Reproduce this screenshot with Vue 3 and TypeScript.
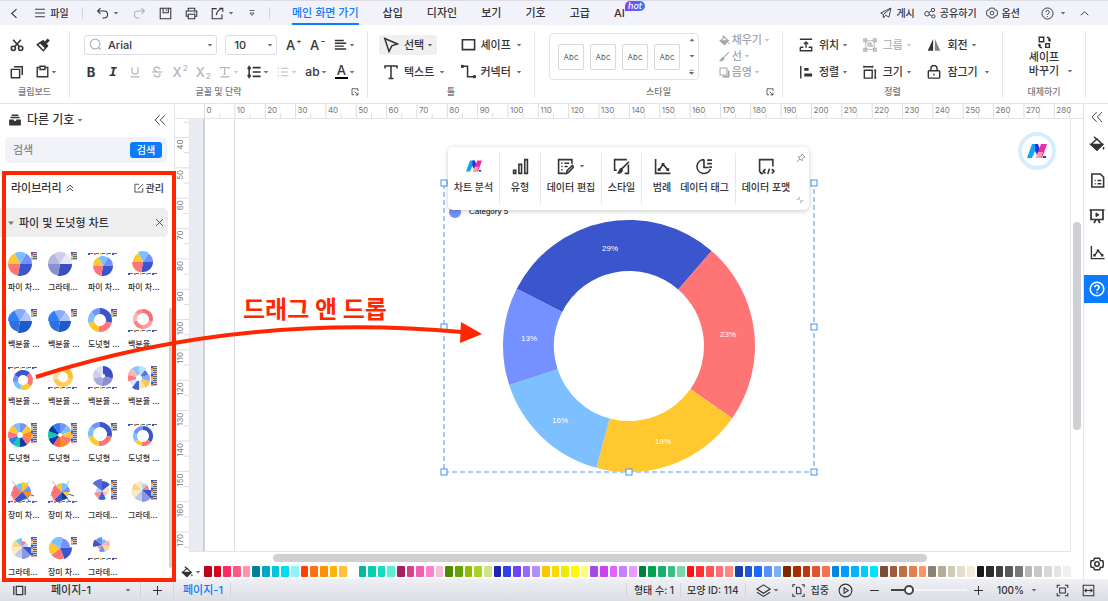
<script setup lang="ts">
import { h, ref } from 'vue'

const glyphs: Record<string, string> = {
  back: '<path d="M10.5 2.500 4.500 8l6 5.500"/>',
  up: '<path d="M2.500 10.500 8 5.500l5.500 5"/>',
  menu: '<path d="M1.500 3h13M1.500 8h13M1.500 13h13"/>',
  undo: '<path d="M5.500 1.500 2 5l3.500 3.500M2.400 5H10a4 4 0 0 1 0 8.500H8"/>',
  redo: '<path d="M10.500 1.500 14 5l-3.500 3.500M13.600 5H6a4 4 0 0 0 0 8.500H8"/>',
  save: '<path d="M1.500 1.500h13v13h-13zM5 1.500v5.500h6.500V1.500M9 3v2"/>',
  print: '<path d="M4 5V1.500h8V5M4 11.500H1.500V5h13v6.500H12M4 9h8v5.500H4zM11.500 7h1"/>',
  share: '<path d="M7 2H1.500v12.500h12V9M10 1.500h4.500V6M14.500 1.500C9.500 3 7 6 6.500 10"/>',
  more: '<path d="M3 3h10M4 8l4 5 4-5z"/>',
  plane: '<path d="M14.500 1.500 1 8l3.500 2 10-8.500L12 13.500 7.500 11M4.500 10v4.500l3-3.500"/>',
  nodes: '<circle cx="4" cy="9" r="3"/><circle cx="12" cy="4" r="2.200"/><circle cx="12.500" cy="12.500" r="2.200"/><path d="M6.500 7.500 10 5M6.800 10l3.500 1.600"/>',
  gear: '<path d="M5.200 1.500h5.600l1 2.400 2.700.4 1 3.700-1 3.700-2.700.4-1 2.400H5.200l-1-2.400-2.700-.4-1-3.700 1-3.700 2.700-.4z"/><circle cx="8" cy="8" r="2.500"/>',
  help: '<circle cx="8" cy="8" r="6.800"/><path d="M5.900 6.300a2.100 2.100 0 1 1 3.200 1.800c-.8.500-1.100.8-1.100 1.700M8 11.200v1"/>',
  cut: '<circle cx="3.800" cy="11.800" r="2.400"/><circle cx="12.200" cy="11.800" r="2.400"/><path d="M5.200 10 12.500 2M10.800 10 3.500 2"/>',
  brush: '<path d="M1.500 7.500 8 3.500l5 5.500-4.500 5.500z"/><path d="M5 5.500 8 3.500l5 5.500-2 2.300z" fill="currentColor"/><path d="m11 5.500 3.500-3.800" stroke-width="3.400"/>',
  copy: '<path d="M1.500 5h9.500v9.500H1.500zM4.500 2h9.500v9.500"/>',
  paste: '<path d="M4.500 3h-3v11.500h13V3h-3"/><path d="M5 1.500h6v4H5z"/>',
  search: '<circle cx="7.500" cy="7.500" r="6"/><path d="m12 12 2.500 2.500"/>',
  alignL: '<path d="M1 3h11M1 6.500h14M1 10h11M1 13.500h14"/>',
  under: '<path d="M4 1.500V7a4 4 0 0 0 8 0V1.500M2 14.500h12"/>',
  strike: '<path d="M12 4.500C11.500 2.500 10 1.500 8 1.500c-2.500 0-4 1.200-4 3s1.500 2.500 4 3M1 8h14M4 11c.3 2.200 1.800 3.500 4 3.500 2.500 0 4-1.200 4-3 0-.8-.2-1.500-.8-2"/>',
  charT: '<path d="M2 4V2h11v2M7.500 2v9M5.500 11h4M2 14.500h12"/>',
  spacing: '<path d="M6.500 3h9M6.500 8h9M6.500 13h9"/><path d="M2.500 2v12M.8 4.500 2.500 2l1.700 2.500M.8 11.500 2.500 14l1.700-2.500"/>',
  list: '<path d="M5.500 3H15M5.500 8H15M5.500 13H15M1 3h1.800M1 8h1.800M1 13h1.800"/>',
  launch: '<path d="M6 13.500H2v-12h12V6M7 7l7 7M14 9v5H9"/>',
  cursor: '<path d="M1.800 1.500 14.500 7 8.800 8.800 6 14.500z"/>',
  rect: '<path d="M1.500 3h13v10.500h-13z"/>',
  text: '<path d="M2 4.500V2h12v2.500M8 2v12.500M5.500 14.500h5"/>',
  connector: '<path d="M1 2.500h6v11h7"/><circle cx="1.500" cy="2.500" r="1" fill="currentColor"/><circle cx="14.300" cy="13.500" r="1" fill="currentColor"/>',
  fill: '<path d="m8 3 5.500 5.500L8 14 2 8.500z"/><path d="M2 8.500h11.500L8 14z" fill="currentColor"/><path d="M5 .8 8.500 4M14.500 11v2.500"/>',
  line: '<path d="M14.500 1.500 6.500 9.500"/><path d="M6 9.500c-2 0-2 2-4.500 4.500 3 .5 5.500-1 5.500-3.500z" fill="currentColor"/>',
  shadow: '<path d="M1.500 1.500h10v10h-10z"/><path d="M14 5v9H5" stroke-width="2.500"/>',
  position: '<path d="M1 1.500h14M1.500 10.500v4h13v-4H11M5 10.500H1.500M8 11V5M5.500 7 8 4.500 10.500 7"/>',
  alignB: '<path d="M2 1v14.500"/><path d="M6 5h5M6 11.500h9" stroke-width="3.400"/>',
  group: '<path d="M3 3h10v10H3z" opacity=".7"/><path d="M1 1h3v3H1zM12 1h3v3h-3zM1 12h3v3H1zM12 12h3v3h-3zM6 6h3v3H6zM8 8.500h2.500V10"/>',
  size: '<path d="M1.500 6h9v9h-9zM1 2h10M1 .8v2.400M11 .8v2.400M14 6v9M12.800 6h2.400M12.800 15h2.400"/>',
  rotate: '<path d="M7 1v13.500H.8z" fill="currentColor" stroke="none"/><path d="M9 1v13.500h6.200z" fill="currentColor" stroke="none" opacity=".6"/>',
  lock: '<rect x="1.500" y="6.500" width="13" height="8.500" rx="1"/><path d="M4.500 6V4a3.500 3.500 0 0 1 7 0v2M8 10v2"/>',
  swap: '<path d="M1.500 1.500H7V7H1.500zM9.500 9.500H14V14H9.500zM11 1.500c2.500 0 3.500 1.200 3.500 4M12.500 4.500l2 1.500 1-2M5 14.500c-2.500 0-3.500-1-3.500-3.800M.5 12l1-1.500 2 1.200"/>',
  tray: '<path d="M3.500 1.500h9M2 4.500h12" stroke-width="2"/><path d="M1 8h4.500c0 1.300 1 2.200 2.500 2.200s2.500-.9 2.500-2.200H15v6.500H1z" fill="currentColor"/>',
  collapseL: '<path d="M7.500 1.500 1.500 8l6 6.500M14.500 1.500 8.500 8l6 6.500"/>',
  collapseU: '<path d="m3 8 5-4.500L13 8M3 13l5-4.500 5 4.500"/>',
  edit: '<path d="M8 2H1.500v12.500H14V8M6.500 10l8-8.500"/>',
  close: '<path d="m2 2 12 12M14 2 2 14"/>',
  bars: '<path d="M1.500 11.500h2v3h-2zM6.500 6h2.500v8.500H6.500zM12 1.500h2.500v13H12z"/>',
  dataEdit: '<path d="M14 5.500v-4H1.500v13H8M4 5h1.200M7 5h4.500M4 8h1.200M7 8h3M4 11h1.200M9 14.500l.5-2.500 5-5 1.200 1.500-4.800 5z"/>',
  styler: '<path d="M3.500 11.500h-2v-10h11.500M14.500 6v8.500h-3.500M15 3.500 8.500 10"/><path d="M8 10c-1.500 0-1.500 2-3 4 2 .4 3.600-1 3.600-3z" fill="currentColor"/>',
  scatter: '<path d="M1.500 1v13.500H15.500M5 11 8.500 6l4.500 5"/><path d="M8.500 4.700v2.600M4.800 9.700v2.600M13 9.700v2.600" stroke-width="2.600"/>',
  tag: '<path d="M7.500 1.500a6.500 6.500 0 1 0 6 9M7.500 1.500V9H12M10.500 2H15M10.500 5.300H15M12.500 8.600H15"/>',
  format: '<path d="M5 14.500H3l-1.500-2v-11h12.500V8M7 10.500 5 12.500l2 2M13 10.500l2 2-2 2M10.800 10l-1.600 5"/>',
  pin: '<path d="m9.500 1.500 5 5-2 .5-2.500 2.500-.5 3L3.500 6.500l3-.5L9 3.500zM6.500 9.500l-5 5"/>',
  shrink: '<path d="M6.500 1.500v5h-5M9.500 14.500v-5h5"/>',
  doc: '<path d="M2 1h9l3.500 3.500V15H2zM5 8h1M8 8h4M5 11.500h1M8 11.500h4"/>',
  present: '<path d="M.5 2h15M2 2v9.500h12V2M5 15l2-3.500M11 15l-2-3.500"/><path d="m7 5 3 1.800-3 1.800z" fill="currentColor" stroke-width="1"/>',
  pages: '<path d="M4 3h8v10H4zM1 2.500v11M15 2.500v11"/>',
  plus: '<path d="M8 1.500v13M1.500 8h13"/>',
  minus: '<path d="M1.500 8h13"/>',
  layers: '<path d="M8 2 15 6.500 8 11 1 6.500zM1 9.800l7 4.500 7-4.500"/>',
  docFrame: '<path d="M4 1H1v3M12 1h3v3M4 15H1v-3M12 15h3v-3M5.500 4h3l2.500 2.500V12H5.500z"/>',
  play: '<circle cx="8" cy="8" r="6.800"/><path d="m6.500 5 4.500 3-4.500 3z"/>',
  fit: '<path d="M1.500 5V1.500H5M11 1.500h3.500V5M14.500 11v3.500H11M5 14.500H1.500V11M4.500 5h7v6h-7z"/>',
  fitWidth: '<path d="M1.500 1.500h13v13h-13zM3.500 8h9M5.500 6l-2 2 2 2M10.500 6l2 2-2 2"/>',
  caret: '<path d="M2 5h12l-6 7z" fill="currentColor" stroke="none"/>',
  caretUp: '<path d="M2 11h12L8 4z" fill="currentColor" stroke="none"/>',
  caretMore: '<path d="M3 3h10"/><path d="M2 7h12l-6 6z" fill="currentColor" stroke="none"/>',
}

const Icon = (props: { n: string; s?: number; w?: number }) =>
  h('svg', {
    viewBox: '0 0 16 16',
    width: props.s ?? 13,
    height: props.s ?? 13,
    fill: 'none',
    stroke: 'currentColor',
    'stroke-width': props.w ?? 1.5,
    'aria-hidden': 'true',
    innerHTML: glyphs[props.n],
  })
Icon.props = ['n', 's', 'w']

const Caret = () => h(Icon, { n: 'caret', s: 6, opacity: 0.7 })

const tabs = ['메인 화면 가기', '삽입', '디자인', '보기', '기호', '고급']
const fontName = ref('Arial')
const fontSize = ref('10')
const query = ref('')
const zoom = ref(20)

const arrange = [
  { icon: 'position', label: '위치' },
  { icon: 'group', label: '그룹', off: true },
  { icon: 'rotate', label: '회전' },
  { icon: 'alignB', label: '정렬' },
  { icon: 'size', label: '크기' },
  { icon: 'lock', label: '잠그기', wide: true },
]

const chartTools = [
  { icon: 'logo', label: '차트 분석', sep: true },
  { icon: 'bars', label: '유형', sep: true },
  { icon: 'dataEdit', label: '데이터 편집', sep: true, drop: true },
  { icon: 'styler', label: '스타일', sep: true },
  { icon: 'scatter', label: '범례' },
  { icon: 'tag', label: '데이터 태그', sep: true },
  { icon: 'format', label: '데이터 포맷' },
]

function point(cx: number, cy: number, r: number, deg: number) {
  const a = ((deg - 90) * Math.PI) / 180
  return `${(cx + r * Math.cos(a)).toFixed(2)} ${(cy + r * Math.sin(a)).toFixed(2)}`
}

function wedge(cx: number, cy: number, r: number, inner: number, from: number, to: number) {
  const big = to - from > 180 ? 1 : 0
  return `M${point(cx, cy, r, from)}A${r} ${r} 0 ${big} 1 ${point(cx, cy, r, to)}L${point(cx, cy, inner, to)}A${inner} ${inner} 0 ${big} 0 ${point(cx, cy, inner, from)}Z`
}

const donut = [
  { from: -63, to: 41, color: '#3b55cc', label: '29%', x: 166, y: 68 },
  { from: 41, to: 125, color: '#ff7575', label: '23%', x: 284, y: 154 },
  { from: 125, to: 195, color: '#ffc82e', label: '19%', x: 219, y: 261 },
  { from: 195, to: 252, color: '#7cc0ff', label: '16%', x: 116, y: 240 },
  { from: 252, to: 297, color: '#7590ff', label: '13%', x: 85, y: 158 },
]
const handles = [[0, 0], [370, 0], [0, 144], [370, 144], [0, 289], [185, 289], [370, 289]]

const main5 = ['#7cc0ff', '#7590ff', '#3b55cc', '#ff7575', '#ffc82e']
const donut5 = ['#3b55cc', '#ff7575', '#ffc82e', '#7cc0ff', '#7590ff']
const lilac = ['#cdcfea', '#e6e8f8', '#3b4fc0', '#8a90d4', '#b4b8e0']
const blues = ['#86a8ff', '#b0c4ff', '#1f5bc8', '#2f6fe0', '#2f80f5']
const reds = ['#ff6a70', '#ff9a9e', '#ff8085', '#ffb4b6', '#ff8a8e']
const golds = ['#ffc02e', '#ffd067', '#ffca50', '#ffdc90', '#ffd67c']
const rainbow = ['#7590ff', '#ffc82e', '#ff8a1e', '#ff7575', '#0a3ba8', '#12c8b0', '#2f80f5', '#ff7575', '#ffc82e', '#7cc0ff']
const vivid = ['#7590ff', '#7cc0ff', '#ffc82e', '#ff7575', '#ff8a1e', '#ff5a5a', '#0a3ba8', '#12c8b0', '#0a3ba8', '#2f80f5']
const soft = ['#b8e0ff', '#4d7be8', '#8ca8f8', '#fbc55a', '#ffe0a0', '#3b62d8', '#d5e6ff', '#ff7c80', '#ffb4b4', '#8cc4ff']

const pieCuts = [-28, 32, 90, 190, 270, 332]
const ringCuts = [0, 104, 187, 255, 313, 360]

interface Thumb {
  label: string
  cx: number
  cy: number
  r: number
  inner: number
  colors: string[]
  cuts: number[]
  radii?: number[]
  legend: 'right' | 'top' | 'bottom' | 'tall'
  rays?: boolean
}

function even(n: number) {
  return Array.from({ length: n + 1 }, (_, i) => (i * 360) / n)
}

const thumbs: Thumb[] = [
  { label: '파이 차...', cx: 12, cy: 16, r: 12, inner: 0, colors: main5, cuts: pieCuts, legend: 'right' },
  { label: '그라데...', cx: 12, cy: 16, r: 12, inner: 0, colors: lilac, cuts: pieCuts, legend: 'right' },
  { label: '파이 차...', cx: 15, cy: 18, r: 10, inner: 0, colors: main5, cuts: pieCuts, legend: 'top' },
  { label: '파이 차...', cx: 15, cy: 14, r: 10, inner: 0, colors: main5, cuts: pieCuts, radii: [11, 10, 10, 11, 10], legend: 'bottom' },
  { label: '백분율 ...', cx: 12, cy: 16, r: 12, inner: 0, colors: blues, cuts: pieCuts, radii: [12, 11, 12, 11, 12], legend: 'right' },
  { label: '백분율 ...', cx: 12, cy: 16, r: 11, inner: 0, colors: blues, cuts: pieCuts, radii: [11, 10, 11, 11, 12], legend: 'right' },
  { label: '도넛형 ...', cx: 12, cy: 15, r: 12, inner: 6, colors: donut5, cuts: ringCuts, legend: 'right' },
  { label: '백분율 ...', cx: 15, cy: 14, r: 10, inner: 6, colors: reds, cuts: ringCuts, legend: 'bottom' },
  { label: '백분율 ...', cx: 15, cy: 18, r: 10, inner: 5, colors: donut5, cuts: [-60, 45, 128, 196, 254, 300], legend: 'top' },
  { label: '백분율 ...', cx: 15, cy: 15, r: 10, inner: 5, colors: golds, cuts: ringCuts, legend: 'bottom' },
  { label: '백분율 ...', cx: 15, cy: 14, r: 10, inner: 2, colors: ['#3b4fc0', '#8a90d4', '#a8acde', '#cdcfea', '#dcdef4'], cuts: ringCuts, legend: 'bottom' },
  { label: '백분율 ...', cx: 11, cy: 16, r: 12, inner: 3, colors: soft, cuts: even(10), radii: [12, 10, 11, 12, 11, 12, 10, 11, 12, 12], legend: 'tall' },
  { label: '도넛형 ...', cx: 12, cy: 16, r: 12, inner: 3, colors: rainbow, cuts: even(10), legend: 'tall' },
  { label: '도넛형 ...', cx: 12, cy: 16, r: 12, inner: 2, colors: vivid, cuts: even(10), legend: 'tall' },
  { label: '도넛형 ...', cx: 12, cy: 15, r: 12, inner: 7, colors: donut5, cuts: ringCuts, legend: 'right' },
  { label: '도넛형 ...', cx: 15, cy: 17, r: 10, inner: 6, colors: donut5, cuts: [0, 128, 190, 235, 290, 360], legend: 'top' },
  { label: '장미 차...', cx: 14, cy: 16, r: 10, inner: 0, colors: ['#ffc82e', '#7590ff', '#ff8a1e', '#3b55cc', '#3b55cc', '#ff7575', '#ff7575', '#7cc0ff'], cuts: even(8), radii: [10, 9, 9, 8, 11, 11, 10, 9], legend: 'bottom', rays: true },
  { label: '장미 차...', cx: 14, cy: 16, r: 10, inner: 0, colors: ['#7cc0ff', '#7590ff', '#ffc82e', '#0a3ba8', '#3b55cc', '#ff7575', '#ff7575', '#ffc82e'], cuts: even(8), radii: [9, 8, 7, 8, 11, 11, 10, 9], legend: 'bottom', rays: true },
  { label: '그라데...', cx: 14, cy: 15, r: 10, inner: 0, colors: ['#3b55cc', '#ffe0a8', '#ffc4c4', '#3b62d8', '#ff8a90', '#a8dcff', '#5a70e0'], cuts: even(7), radii: [10, 7, 6, 9, 8, 6, 12], legend: 'tall' },
  { label: '그라데...', cx: 14, cy: 14, r: 12, inner: 0, colors: ['#a8dcff', '#ff7c80', '#3b55cc', '#8a98e4', '#c0c8f0', '#ffe9c0', '#fbd58a', '#ffe6b8'], cuts: even(8), radii: [7, 7, 12, 12, 11, 11, 10, 9], legend: 'tall' },
  { label: '그라데...', cx: 14, cy: 14, r: 12, inner: 0, colors: ['#ff7c80', '#a8dcff', '#3b55cc', '#8a98e4', '#c0c8f0', '#ffe9c0', '#fbd58a', '#7cc0ff'], cuts: even(8), radii: [6, 6, 12, 12, 11, 11, 10, 9], legend: 'tall' },
  { label: '장미 차...', cx: 12, cy: 15, r: 11, inner: 0, colors: ['#7590ff', '#3b55cc', '#ff7575', '#ffc82e', '#7cc0ff'], cuts: [14, 86, 158, 230, 302, 374], radii: [10, 12, 11, 11, 11], legend: 'right' },
  { label: '그라데...', cx: 14, cy: 12, r: 9, inner: 0, colors: ['#7cc0ff', '#ffb0b0', '#ffd890', '#6a90f0', '#ff8a90', '#3b55cc', '#6a90f0'], cuts: even(7), radii: [6, 8, 8, 7, 5, 9, 8], legend: 'bottom' },
]

const legendTint = ['#3b55cc', '#ff7575', '#ffc82e', '#7cc0ff']
function legendMarks(t: Thumb) {
  const out: { x: number; y: number; w: number; h: number; c: string }[] = []
  if (t.legend === 'right' || t.legend === 'tall') {
    const rows = t.legend === 'right' ? 4 : 10
    for (let i = 0; i < rows; i++) {
      out.push({ x: 23, y: 4 + i * 2, w: 2, h: 2, c: legendTint[i % 4] })
      out.push({ x: 25, y: 4 + i * 2, w: 4, h: 1, c: '#62626c' })
      out.push({ x: 25, y: 5 + i * 2, w: 4, h: 1, c: '#c4c4cc' })
    }
  } else {
    const y = t.legend === 'top' ? 5 : 25
    for (let i = 0; i < 5; i++) {
      out.push({ x: i * 6, y, w: 2, h: 2, c: legendTint[i % 4] })
      out.push({ x: 2 + i * 6, y, w: 3, h: 1, c: '#62626c' })
    }
  }
  return out
}

const palette = (
  'be0018 e00020 ff2860 ff5a84 ff94ac 008094 00a8c4 00c4e0 00dcf8 8cf4ff ff4000 ff7210 ff9000 ffb400 ffc040 ffffff ' +
  '00b89c 00d0b0 14dcc4 58f0d8 a82060 d84090 f45cac ff80cc f8bcdc 508c00 64a400 8cc000 a8d428 d0e488 ' +
  '1c24b4 3040e4 7040ff 9868ff b090ff ffc400 ffd800 f0e800 fff800 ffff74 a44ce0 d040ec e064ff c480ff e89cff ' +
  '00803c 00a44c 14b070 38c084 78d8ac ff1010 ff3030 ff5458 ff7074 ff8a84 1840a8 1c58d8 1c68ff 5890ff 7cb0ff ' +
  '802800 a43000 b83810 e05430 f87050 0088e0 009cff 00b4ff 00ccff 00e4ff 804c34 a05c3c c07048 e48050 ff9464 ' +
  '8c8078 b4ac98 d0ccb4 e8dccc f4ecd8 181818 2c2c2c 404040 585858 787878 b8b8b8 c8c8c8 d8d8d8 e4e4e4 f0f0f0 ffffff'
).split(' ')

const step = 30.35
const topMarks = Array.from({ length: 29 }, (_, i) => ({ v: i * 10, p: 14.5 + i * step }))
const sideMarks = Array.from({ length: 14 }, (_, i) => ({ v: 40 + i * 10, p: 18.5 + i * step }))
</script>

<template>
  <div class="app">
    <header class="titlebar">
      <nav class="quick">
        <button aria-label="뒤로"><Icon n="back" :w="1.3" /></button>
        <button class="file"><Icon n="menu" :s="12" :w="1.3" />파일</button>
        <i class="bar"></i>
        <button class="drop" aria-label="실행 취소"><Icon n="undo" :w="1.3" /><Caret /></button>
        <button class="dim" aria-label="다시 실행"><Icon n="redo" :w="1.3" /></button>
        <button aria-label="저장"><Icon n="save" :w="1.3" /></button>
        <button aria-label="인쇄"><Icon n="print" :w="1.3" /></button>
        <button class="drop" aria-label="내보내기"><Icon n="share" :w="1.3" /><Caret /></button>
        <button aria-label="더 보기"><Icon n="more" :s="8" /></button>
        <i class="bar"></i>
      </nav>
      <nav class="tabs">
        <button v-for="(t, i) in tabs" :key="t" :class="{ active: i === 0 }">{{ t }}</button>
        <button class="ai">AI<span class="hot">hot</span></button>
      </nav>
      <nav class="account">
        <button><Icon n="plane" :s="12" :w="1.2" />게시</button>
        <button><Icon n="nodes" :s="12" :w="1.2" />공유하기</button>
        <button><Icon n="gear" :s="12" :w="1.2" />옵션</button>
        <button class="helper" aria-label="도움말"><Icon n="help" :w="1.2" /><Caret /></button>
        <button aria-label="접기"><Icon n="up" :s="11" :w="1.3" /></button>
      </nav>
    </header>

    <section class="ribbon">
      <div class="group clip">
        <div class="rows">
          <div class="row">
            <button aria-label="잘라내기"><Icon n="cut" :s="14" :w="1.8" /></button>
            <button aria-label="서식 복사"><Icon n="brush" :s="14" :w="1.7" /></button>
          </div>
          <div class="row">
            <button aria-label="복사"><Icon n="copy" :s="14" :w="1.7" /></button>
            <button aria-label="붙여넣기"><Icon n="paste" :w="1.7" /><Caret /></button>
          </div>
        </div>
        <p>클립보드</p>
      </div>

      <div class="group font">
        <div class="rows">
          <div class="row spread">
            <label class="field family">
              <Icon n="search" class="pale" />
              <select v-model="fontName" aria-label="글꼴"><option>Arial</option></select>
              <Caret />
            </label>
            <label class="field size">
              <select v-model="fontSize" aria-label="글꼴 크기"><option>10</option></select>
              <Caret />
            </label>
            <button class="letter" aria-label="글꼴 크게">A<sup>+</sup></button>
            <button class="letter" aria-label="글꼴 작게">A<sup>−</sup></button>
            <button aria-label="단락 정렬"><Icon n="alignL" :w="1.8" /><Caret /></button>
          </div>
          <div class="row spread marks">
            <button class="letter bold" aria-label="굵게">B</button>
            <button class="letter italic" aria-label="기울임꼴">I</button>
            <button class="off" aria-label="밑줄"><Icon n="under" :s="12" /></button>
            <button class="off" aria-label="취소선"><Icon n="strike" :s="12" /></button>
            <button class="letter off" aria-label="위 첨자">X<sup>2</sup></button>
            <button class="letter off" aria-label="아래 첨자">X<sub>2</sub></button>
            <button class="off" aria-label="텍스트 효과"><Icon n="charT" :s="12" /><Caret /></button>
            <button aria-label="줄 간격"><Icon n="spacing" :s="14" :w="1.8" /><Caret /></button>
            <button class="off" aria-label="목록"><Icon n="list" :s="12" /><Caret /></button>
            <button class="letter ab" aria-label="대소문자">ab<Caret /></button>
            <button class="letter" aria-label="글꼴 색"><span class="inked">A</span><Caret /></button>
          </div>
        </div>
        <p>글꼴 및 단락</p>
        <button class="launcher" aria-label="글꼴 설정"><Icon n="launch" :s="8" /></button>
      </div>

      <div class="group tools">
        <div class="rows pair">
          <button class="tool picked"><Icon n="cursor" :s="16" :w="1.5" />선택<Caret class="near" /></button>
          <button class="tool"><Icon n="rect" :s="15" :w="1.7" />셰이프<Caret /></button>
          <button class="tool"><Icon n="text" :s="16" :w="1.5" />텍스트<Caret /></button>
          <button class="tool"><Icon n="connector" :s="15" :w="1.6" />커넥터<Caret /></button>
        </div>
        <p>툴</p>
      </div>

      <div class="group style">
        <div class="rows side">
          <div class="gallery">
            <button v-for="n in 4" :key="n" class="swatch">Abc</button>
            <div class="arrows">
              <button aria-label="이전"><Icon n="caretUp" :s="6" /></button>
              <button aria-label="다음"><Icon n="caret" :s="6" /></button>
              <button aria-label="모두"><Icon n="caretMore" :s="7" /></button>
            </div>
          </div>
          <div class="effects">
            <button><Icon n="fill" :s="11" />채우기<Caret /></button>
            <button><Icon n="line" :s="11" />선<Caret /></button>
            <button><Icon n="shadow" :s="11" />음영<Caret /></button>
          </div>
        </div>
        <p>스타일</p>
        <button class="launcher" aria-label="스타일 설정"><Icon n="launch" :s="8" /></button>
      </div>

      <div class="group arrange">
        <div class="rows trio">
          <button v-for="a in arrange" :key="a.label" class="tool" :class="{ off: a.off }">
            <Icon :n="a.icon" :s="14" :w="1.6" />{{ a.label }}<Caret :class="a.wide ? 'wide' : 'near'" />
          </button>
        </div>
        <p>정렬</p>
      </div>

      <div class="group replace">
        <div class="rows">
          <button class="stacked"><Icon n="swap" :s="13" :w="1.7" /><span>셰이프<br>바꾸기</span><Caret class="corner" /></button>
        </div>
        <p>대체하기</p>
      </div>
    </section>

    <main class="body">
      <aside class="panel">
        <div class="head">
          <Icon n="tray" :s="12" />
          <strong>다른 기호</strong><Caret />
          <button class="push" aria-label="패널 접기"><Icon n="collapseL" :s="12" :w="1.2" /></button>
        </div>
        <form class="find" @submit.prevent>
          <input v-model="query" type="text" placeholder="검색" aria-label="기호 검색">
          <button>검색</button>
        </form>
        <div class="library">
          <span>라이브러리</span><Icon n="collapseU" :s="10" />
          <button class="push"><Icon n="edit" :s="10" :w="1.3" />관리</button>
        </div>
        <div class="section">
          <Icon n="caret" :s="8" /><span>파이 및 도넛형 차트</span>
          <button class="push" aria-label="닫기"><Icon n="close" :s="9" /></button>
        </div>
        <div class="shelf">
          <ul>
            <li v-for="(t, i) in thumbs" :key="i">
              <svg viewBox="0 0 32 32" width="32" height="32">
                <g v-if="t.rays" stroke="#7cc0ff" stroke-width="1">
                  <path d="M14 16 4 5M14 16 21 5" />
                  <path d="M14 16 26 20M14 16 22 26" stroke="#3b55cc" />
                  <path d="M14 16 2 20M14 16 4 25" stroke="#ff9a9a" />
                </g>
                <path
                  v-for="(c, k) in t.colors"
                  :key="k"
                  :fill="c"
                  :d="wedge(t.cx, t.cy, t.radii ? t.radii[k] : t.r, t.inner, t.cuts[k], t.cuts[k + 1])"
                />
                <rect v-for="(m, k) in legendMarks(t)" :key="'m' + k" :x="m.x" :y="m.y" :width="m.w" :height="m.h" :fill="m.c" />
              </svg>
              <span>{{ t.label }}</span>
            </li>
          </ul>
          <i class="thumbbar"></i>
        </div>
      </aside>

      <section class="work">
        <div class="nook"></div>
        <svg class="ruler top">
          <g v-for="m in topMarks" :key="m.v">
            <path :d="`M${m.p} 0V15M${m.p + step / 2} 9V15`" />
            <text :x="m.p + 2" y="9">{{ m.v }}</text>
          </g>
        </svg>
        <div class="nook"></div>
        <svg class="ruler left">
          <path :d="`M9 ${18.5 - step / 2}H15`" />
          <g v-for="m in sideMarks" :key="m.v">
            <path :d="`M0 ${m.p}H15M9 ${m.p + step / 2}H15`" />
            <text :transform="`translate(8 ${m.p + 2}) rotate(-90)`" text-anchor="end">{{ m.v }}</text>
          </g>
        </svg>
        <div class="stage">
          <div class="gutter"></div>
          <div class="margin"></div>
          <svg class="chart" width="370" height="289">
            <rect width="370" height="289" fill="none" stroke="#4a9bf5" stroke-dasharray="5 3" />
            <circle cx="11" cy="29" r="6" fill="#7590ff" />
            <text x="25" y="31" class="cat">Category 5</text>
            <g v-for="d in donut" :key="d.label">
              <path :d="wedge(185, 163, 126, 75, d.from, d.to)" :fill="d.color" />
              <text :x="d.x" :y="d.y" class="pct">{{ d.label }}</text>
            </g>
            <rect v-for="(p, i) in handles" :key="i" :x="p[0] - 3" :y="p[1] - 3" width="6" height="6" fill="#fff" stroke="#3f94f5" />
          </svg>
          <div class="floating">
            <button v-for="c in chartTools" :key="c.label" :class="{ sep: c.sep }">
              <span class="pic">
                <svg v-if="c.icon === 'logo'" viewBox="0 0 20 14" width="16" height="12">
                  <path d="M5 0h6L5 14H0z" fill="#12a4f0" /><path d="M8 0h3l3 8-3 5-3-6z" fill="#3430d8" /><path d="M14 0h6l-5 14h-6z" fill="#f028a8" /><path d="M11 8h5l-2 6H9z" fill="#f8a0a8" /><path d="M16 12h3v2h-3z" fill="#3430d8" />
                </svg>
                <Icon v-else :n="c.icon" :s="17" :w="1.5" />
                <Caret v-if="c.drop" />
              </span>
              {{ c.label }}
            </button>
            <div class="ends"><Icon n="pin" :s="10" :w="1.2" /><Icon n="shrink" :s="8" :w="1.2" /></div>
          </div>
          <button class="assistant" aria-label="AI 도우미">
            <svg viewBox="0 0 20 14" width="20" height="14">
              <path d="M5 0h6L5 14H0z" fill="#12a4f0" /><path d="M8 0h3l3 8-3 5-3-6z" fill="#3430d8" /><path d="M14 0h6l-5 14h-6z" fill="#f028a8" /><path d="M11 8h5l-2 6H9z" fill="#f8a0a8" /><path d="M16 12h3v2h-3z" fill="#3430d8" />
            </svg>
          </button>
        </div>
        <div class="vscroll"><i></i></div>
        <div class="hscroll"><i></i></div>
        <div class="palette">
          <button class="bucket" aria-label="채우기 색"><Icon n="fill" :s="12" /><Caret /></button>
          <i v-for="(c, i) in palette" :key="i" :style="{ background: '#' + c }"></i>
        </div>
      </section>

      <aside class="rail">
        <button aria-label="펼치기"><Icon n="collapseL" :s="12" :w="1.2" /></button>
        <button aria-label="채우기"><Icon n="fill" :s="16" /></button>
        <button aria-label="문서"><Icon n="doc" :s="15" :w="1.7" /></button>
        <button aria-label="프레젠테이션"><Icon n="present" :s="16" :w="1.7" /></button>
        <button aria-label="차트"><Icon n="scatter" :s="15" /></button>
        <button class="on" aria-label="도움말"><Icon n="help" :s="16" :w="1.6" /></button>
        <button class="last" aria-label="설정"><Icon n="gear" :s="14" :w="1.8" /></button>
      </aside>
    </main>

    <footer class="status">
      <button class="view" aria-label="페이지 보기"><Icon n="pages" /></button>
      <label class="page"><select aria-label="페이지"><option>페이지-1</option></select><Caret /></label>
      <button class="add" aria-label="페이지 추가"><Icon n="plus" :s="11" /></button>
      <button class="current">페이지-1</button>
      <span class="cell first">형태 수: 1</span>
      <span class="cell">모양 ID: 114</span>
      <button class="layer" aria-label="레이어"><Icon n="layers" :s="15" :w="1.2" /><Caret /></button>
      <button class="focus"><Icon n="docFrame" :w="1.3" />집중</button>
      <button class="play" aria-label="재생"><Icon n="play" :s="15" :w="1.2" /></button>
      <button aria-label="축소"><Icon n="minus" :s="11" /></button>
      <input v-model="zoom" type="range" min="0" max="100" aria-label="확대/축소">
      <button aria-label="확대"><Icon n="plus" :s="11" /></button>
      <button class="percent">100%<Caret /></button>
      <button aria-label="페이지 맞춤"><Icon n="fit" :w="1.3" /></button>
      <button aria-label="너비 맞춤"><Icon n="fitWidth" :w="1.3" /></button>
    </footer>

    <svg class="callout" aria-hidden="true">
      <rect x="4" y="173" width="170" height="407" fill="none" stroke="#ff2600" stroke-width="4" />
      <path d="M36 377Q240 312 462 332" fill="none" stroke="#ff2600" stroke-width="4" />
      <path d="M461 322 482 334 460 343z" fill="#ff2600" />
      <text x="243" y="318">드래그 앤 드롭</text>
    </svg>
  </div>
</template>

<style>
body {
  margin: 0;
}
</style>

<style scoped>
.app {
  position: relative;
  display: flex;
  flex-direction: column;
  height: 100vh;
  overflow: hidden;
  background: #fff;
  color: #333338;
  font: 500 11px/14px Inter, "Noto Sans CJK KR", sans-serif;
}
.app * {
  box-sizing: border-box;
}
button {
  display: inline-flex;
  align-items: center;
  justify-content: center;
  gap: 2px;
  padding: 0;
  border: 0;
  background: none;
  color: inherit;
  font: inherit;
  white-space: nowrap;
}
svg {
  flex: none;
}
select,
input {
  min-width: 0;
  padding: 0;
  border: 0;
  outline: 0;
  background: none;
  color: inherit;
  font: inherit;
  appearance: none;
}
p {
  margin: 0;
}
.titlebar {
  display: flex;
  align-items: center;
  height: 25px;
  flex: none;
  border-top: 1px solid #dcdde4;
  background: #f2f3fa;
}
.quick {
  display: flex;
  align-items: center;
  justify-content: space-between;
  width: 262px;
  margin-left: 8px;
}
.quick .file {
  gap: 4px;
  font-size: 10px;
}
.quick .drop {
  gap: 4px;
}
.bar {
  width: 1px;
  height: 12px;
  background: #d4d5dc;
}
.dim {
  color: #b0b1b8;
}
.tabs {
  display: flex;
  gap: 24px;
  height: 24px;
  margin-left: 22px;
}
.tabs .active {
  border-bottom: 2px solid #0a7cff;
  padding-top: 2px;
  color: #0a7cff;
}
.tabs .ai {
  position: relative;
}
.hot {
  position: absolute;
  left: 11px;
  top: 0;
  padding: 0 3px;
  border-radius: 5px 5px 5px 0;
  background: linear-gradient(90deg, #8a3cff, #2f7cff);
  color: #fff;
  font: italic 500 9px/10px Inter, sans-serif;
}
.account {
  display: flex;
  align-items: center;
  gap: 9px;
  margin-left: auto;
  margin-right: 18px;
  font-size: 10px;
}
.account button {
  gap: 4px;
}
.account .helper {
  margin: 0 4px 0 12px;
  gap: 6px;
}
.ribbon {
  display: grid;
  grid-template-columns: 70fr 298fr 167fr 248fr 220fr 83fr 22fr;
  height: 79px;
  flex: none;
  padding-top: 6px;
  border-bottom: 1px solid #e4e5ea;
}
.group {
  position: relative;
  display: flex;
  flex-direction: column;
  height: 67px;
  border-right: 1px solid #e8e8ec;
}
.group p {
  color: #77777d;
  font-size: 9px;
  line-height: 12px;
  text-align: center;
}
.rows {
  display: flex;
  flex-direction: column;
  height: 55px;
  flex: none;
}
.row {
  display: flex;
  align-items: center;
  height: 27px;
  flex: none;
  gap: 12px;
}
.clip .row {
  padding-left: 10px;
}
.font .rows {
  padding: 0 12px 0 14px;
}
.spread {
  justify-content: space-between;
  gap: 0;
}
.marks button {
  min-width: 14px;
}
.off,
.pale {
  color: #b4b4ba;
}
.field {
  display: flex;
  align-items: center;
  gap: 4px;
  height: 20px;
  padding: 0 3px 0 4px;
  border: 1px solid #dcdde2;
  border-radius: 3px;
}
.field select {
  flex: 1;
}
.family {
  width: 133px;
}
.family select {
  padding-left: 2px;
}
.size {
  width: 52px;
}
.size select {
  padding-left: 4px;
}
.letter {
  gap: 1px;
  font: 500 13px/16px Inter, sans-serif;
}
.letter.bold {
  font-weight: 700;
}
.letter.italic {
  font-family: "DejaVu Sans Mono", monospace;
  font-style: italic;
  font-weight: 700;
}
.letter.ab {
  font-size: 12px;
}
.letter sup,
.letter sub {
  font-size: 8px;
  line-height: 8px;
}
.letter sup {
  align-self: flex-start;
}
.letter sub {
  align-self: flex-end;
}
.inked {
  padding: 0 2px;
  border-bottom: 2px solid #000;
  line-height: 13px;
}
.launcher {
  position: absolute;
  right: 8px;
  bottom: 2px;
}
.rows.pair {
  display: grid;
  grid-template-columns: 78fr 78fr;
  grid-template-rows: 27px 27px;
  padding-left: 11px;
  align-items: center;
  justify-items: start;
}
.tool {
  gap: 5px;
  padding: 0 2px 0 4px;
  height: 20px;
}
.tool .near {
  margin-left: -3px;
}
.picked {
  padding-right: 4px;
  border-radius: 3px;
  background: #f0f0f1;
}
.picked .near {
  margin-left: -2px;
}
.rows.side {
  flex-direction: row;
  padding: 2px 12px 0 14px;
  justify-content: space-between;
}
.gallery {
  display: flex;
  align-items: center;
  gap: 6px;
  height: 47px;
  padding: 0 3px 0 8px;
  border: 1px solid #e2e3e8;
  border-radius: 4px;
}
.swatch {
  width: 26px;
  height: 26px;
  border: 1px solid #d8d9de;
  border-radius: 2px;
  color: #66666c;
  font-size: 8px;
  font-weight: 400;
}
.arrows {
  display: flex;
  flex-direction: column;
  gap: 10px;
  margin-left: 2px;
  color: #66666c;
}
.effects {
  display: flex;
  flex-direction: column;
  justify-content: space-between;
  align-items: flex-start;
  height: 46px;
  color: #a4a4aa;
}
.rows.trio {
  display: grid;
  grid-template-columns: 64fr 65fr 79fr;
  grid-template-rows: 27px 27px;
  padding-left: 12px;
  align-items: center;
  justify-items: start;
}
.trio .tool {
  gap: 6px;
}
.stacked {
  position: relative;
  flex-direction: column;
  gap: 1px;
  padding-top: 5px;
}
.stacked span {
  line-height: 14px;
}
.corner {
  position: absolute;
  right: 12px;
  bottom: 4px;
}
.body {
  display: flex;
  flex: 1;
  min-height: 0;
}
.panel {
  display: flex;
  flex-direction: column;
  width: 175px;
  flex: none;
  border-right: 1px solid #e4e5ea;
}
.head,
.library,
.section {
  display: flex;
  align-items: center;
  flex: none;
}
.head {
  gap: 3px;
  height: 31px;
  padding: 0 8px 0 9px;
}
.head strong {
  margin-left: 3px;
  font-size: 12px;
  font-weight: 500;
}
.push {
  margin-left: auto;
}
.find {
  display: flex;
  align-items: center;
  height: 26px;
  flex: none;
  margin: 2px 7px 0 5px;
  padding: 0 5px 0 8px;
  border-radius: 5px;
  background: #f2f3f9;
}
.find input {
  flex: 1;
}
.find input::placeholder {
  color: #85868e;
}
.find button {
  width: 32px;
  height: 16px;
  border-radius: 3px;
  background: #0a7cff;
  color: #fff;
  font-size: 10px;
}
.library {
  gap: 3px;
  margin-top: 18px;
  padding: 0 10px 0 11px;
}
.library button {
  font-size: 10px;
}
.section {
  gap: 4px;
  height: 29px;
  margin: 13px 6px 0 0;
  padding: 0 4px 0 7px;
  border-radius: 0 5px 5px 0;
  background: #eeeeef;
}
.section > svg {
  color: #77777d;
}
.shelf {
  display: flex;
  flex: 1;
  min-height: 0;
  justify-content: space-between;
}
.shelf ul {
  display: grid;
  grid-template-columns: repeat(4, 40px);
  grid-auto-rows: 57px;
  margin: 0;
  padding: 11px 0 0 8px;
  overflow: hidden;
  list-style: none;
}
.shelf li {
  display: flex;
  flex-direction: column;
  font-size: 8px;
  line-height: 14px;
  white-space: nowrap;
}
.thumbbar {
  width: 4px;
  height: 260px;
  flex: none;
  margin: 71px 1px 0 0;
  border-radius: 2px;
  background: #d2d3d8;
}
.work {
  display: grid;
  grid-template-columns: 15px 1fr 12px;
  grid-template-rows: 15px 1fr 12px 15px;
  flex: 1;
  min-width: 0;
}
.nook {
  border-bottom: 1px solid #e4e5ea;
}
.ruler {
  width: 100%;
  height: 100%;
  overflow: hidden;
  stroke: #dcdde2;
}
.ruler.top {
  border-bottom: 1px solid #e4e5ea;
}
.ruler.left {
  border-right: 1px solid #e4e5ea;
}
.ruler text {
  fill: #77777d;
  stroke: none;
  font: 400 8px Inter, sans-serif;
}
.stage {
  position: relative;
  display: flex;
  min-height: 0;
  overflow: hidden;
  border-right: 1px solid #e4e5ea;
  border-bottom: 1px solid #e4e5ea;
}
.gutter {
  width: 15px;
  border-right: 2px solid #cfd0d6;
  background: #ebecf3;
}
.margin {
  width: 30px;
  border-right: 1px solid #dcdde2;
}
.chart {
  position: absolute;
  left: 254px;
  top: 64px;
  overflow: visible;
}
.cat {
  fill: #000;
  font: 400 8px "Liberation Sans", sans-serif;
}
.pct {
  fill: #fff;
  font: 400 8px "Liberation Sans", sans-serif;
  text-anchor: middle;
}
.floating {
  position: absolute;
  left: 258px;
  top: 28px;
  display: grid;
  grid-template-columns: 52px 41px 61px 40px 40px 54px 60px 13px;
  height: 63px;
  padding: 6px 0;
  border-radius: 5px;
  background: #fff;
  box-shadow: 0 1px 5px rgb(0 0 0 / 22%);
  font-size: 10px;
}
.floating button {
  flex-direction: column;
  justify-content: flex-start;
  gap: 5px;
  padding-top: 4px;
}
.floating .sep {
  border-right: 1px solid #e8e8ec;
}
.floating .sep:nth-child(6) {
  padding-right: 8px;
}
.pic {
  display: flex;
  align-items: center;
  gap: 5px;
  height: 18px;
}
.ends {
  display: flex;
  flex-direction: column;
  justify-content: space-between;
  align-items: flex-start;
  color: #77777d;
}
.assistant {
  position: absolute;
  right: 14px;
  top: 13px;
  width: 38px;
  height: 38px;
  border: 4px solid #d6edff;
  border-radius: 50%;
  background: #fff;
}
.vscroll {
  grid-column: 3;
  grid-row: 2;
}
.vscroll i {
  display: block;
  width: 8px;
  height: 48%;
  margin: 103px 0 0 2px;
  border-radius: 4px;
  background: #cfd0d3;
}
.hscroll {
  grid-column: 1 / 4;
  padding-top: 2px;
}
.hscroll i {
  display: block;
  width: 72%;
  height: 8px;
  margin-left: 98px;
  border-radius: 4px;
  background: #cfd0d3;
}
.palette {
  display: flex;
  align-items: center;
  grid-column: 1 / 4;
}
.palette i {
  flex: 1;
  height: 11px;
  margin-right: 2px;
  border-radius: 1px;
}
.bucket {
  width: 29px;
  padding-left: 3px;
}
.rail {
  display: flex;
  flex-direction: column;
  align-items: stretch;
  width: 25px;
  flex: none;
  padding: 2px 0 0 2px;
  border-left: 1px solid #e4e5ea;
}
.rail button {
  height: 36px;
}
.rail button:first-child {
  height: 20px;
  padding-top: 2px;
}
.rail .on {
  height: 28px;
  margin: 5px 0 0 -2px;
  padding-left: 2px;
  background: #0a7cff;
  color: #fff;
}
.rail .last {
  margin-top: auto;
  height: 30px;
}
.status {
  display: flex;
  align-items: center;
  gap: 13px;
  height: 22px;
  flex: none;
  padding: 0 13px;
  background: linear-gradient(#eff0f5, #dcdee4);
}
.view {
  margin-right: 12px;
}
.page {
  display: flex;
  align-items: center;
  width: 80px;
}
.page select {
  flex: 1;
}
.status .add {
  width: 34px;
  height: 16px;
  margin-left: -4px;
  border-left: 1px solid #d4d5dc;
  border-right: 1px solid #d4d5dc;
}
.current {
  height: 16px;
  margin-left: -4px;
  padding-right: 7px;
  border-right: 1px solid #d4d5dc;
  color: #0a7cff;
}
.cell {
  margin-right: -7px;
  padding-right: 6px;
  border-right: 1px solid #d4d5dc;
  font-size: 10px;
}
.first {
  margin-left: auto;
  padding-left: 7px;
  border-left: 1px solid #d4d5dc;
}
.layer {
  margin-left: 4px;
}
.focus {
  gap: 6px;
  margin-right: -4px;
  font-size: 10px;
}
.play {
  margin-right: 3px;
}
.status .percent {
  gap: 7px;
  margin-right: 6px;
  font-size: 10px;
}
.status input {
  width: 76px;
  height: 12px;
  margin: 0 -7px 0 -2px;
}
.status input::-webkit-slider-runnable-track {
  height: 2px;
  background: linear-gradient(90deg, #44444a 20%, #f4f4f7 20%);
}
.status input::-webkit-slider-thumb {
  width: 10px;
  height: 10px;
  margin-top: -4px;
  border: 2px solid #44444a;
  border-radius: 50%;
  background: #fff;
  appearance: none;
}
.callout {
  position: absolute;
  inset: 0;
  width: 100%;
  height: 100%;
  pointer-events: none;
}
.callout text {
  fill: #ff2600;
  font: 700 24px Inter, "Noto Sans CJK KR", sans-serif;
}
</style>
